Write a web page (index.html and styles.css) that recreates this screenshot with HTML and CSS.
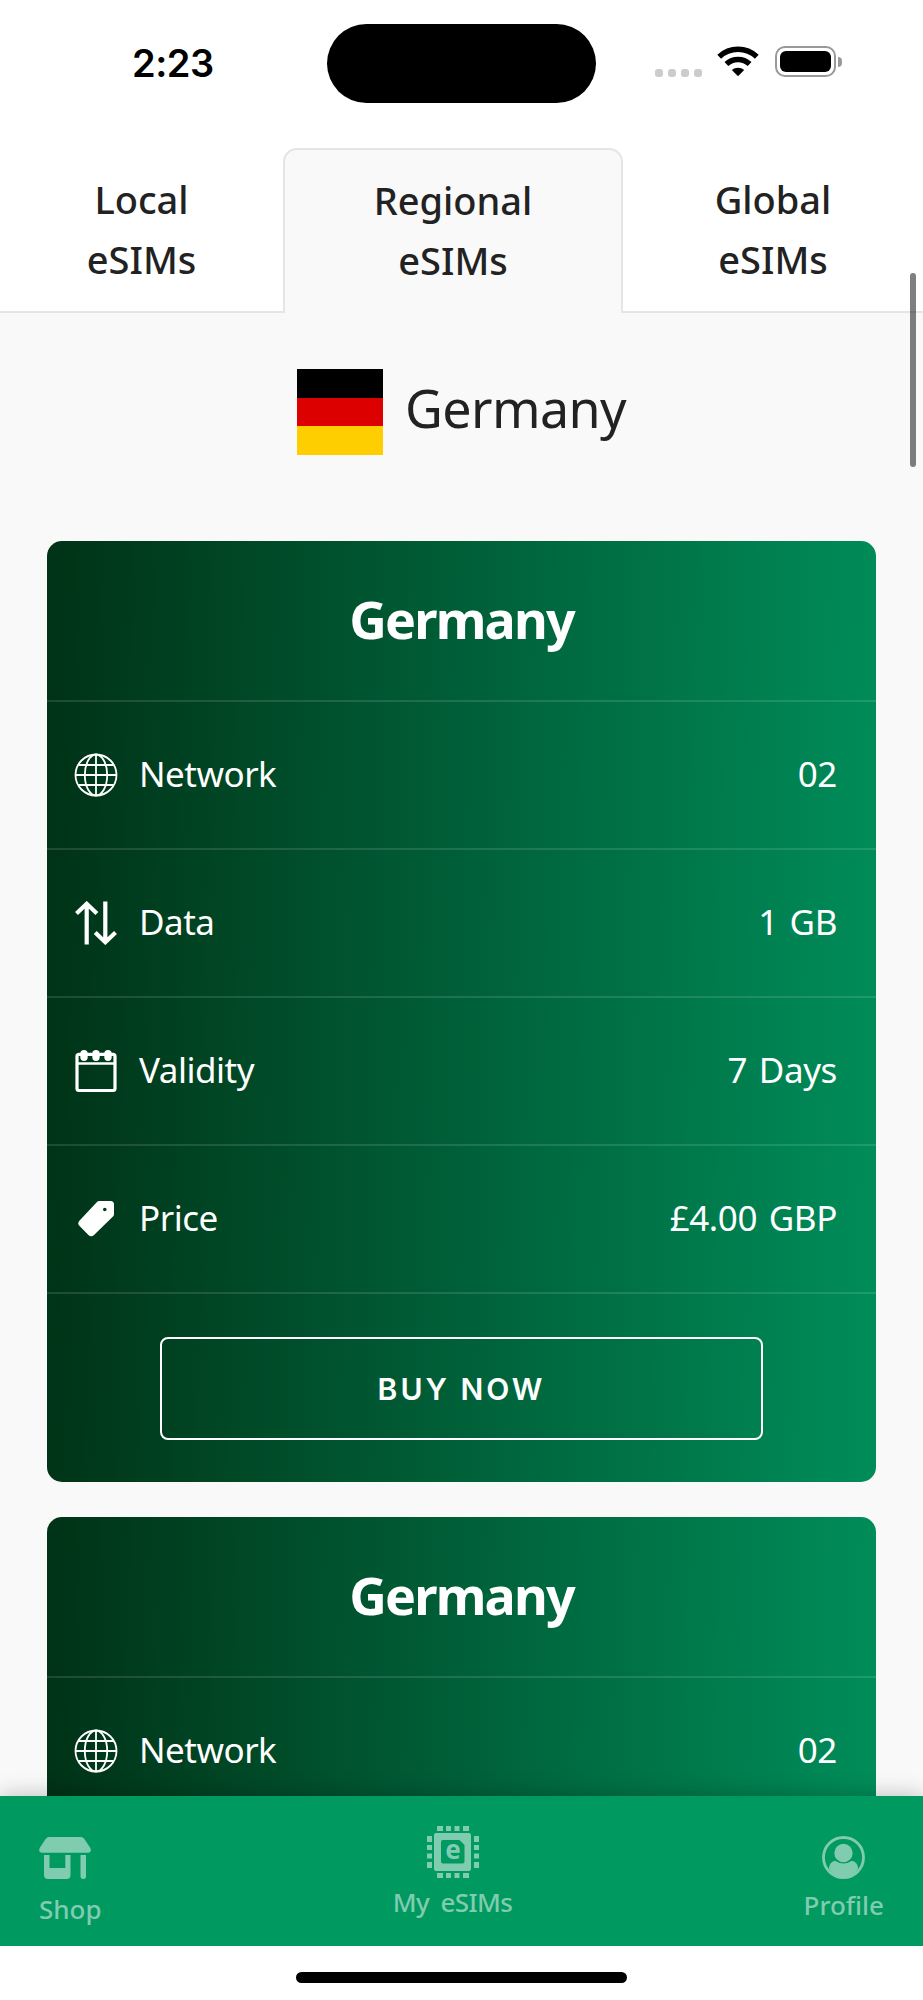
FILE: index.html
```html
<!DOCTYPE html>
<html lang="en">
<head>
    <meta charset="UTF-8">
    <meta name="viewport" content="width=device-width, initial-scale=1.0">
    <title>eSIM Shop - Germany</title>
    <link rel="stylesheet" href="styles.css">
</head>
<body>
    <!-- Shared icons -->
    <svg class="sprite" width="0" height="0">
        <symbol id="icon-globe" viewBox="0 0 44 44">
            <g fill="none" stroke="#fff" stroke-width="1.8">
                <circle cx="22" cy="22" r="20.5"/>
                <ellipse cx="22" cy="22" rx="11.2" ry="20.5"/>
                <path d="M22 1.5v41M1.5 22h41M4.5 12h35M4.5 32h35"/>
            </g>
        </symbol>
        <symbol id="icon-data" viewBox="0 0 44 44">
            <path d="M12.7 43.5V3M2.5 12.5L12.7 2.8l10.2 9.7M31.3 .5V41M21.2 31.5l10.1 9.7 10.2-9.7" fill="none" stroke="#fff" stroke-width="4.2"/>
        </symbol>
        <symbol id="icon-calendar" viewBox="0 0 44 44">
            <rect x="3" y="5.3" width="38" height="36.2" rx="2" fill="none" stroke="#fff" stroke-width="3.2"/>
            <path d="M2 14.5h40" stroke="#fff" stroke-width="2.6"/>
            <path d="M10 4.700v3.600M22 4.700v3.600M34 4.700v3.600" stroke="#fff" stroke-width="7.400" stroke-linecap="round"/>
        </symbol>
        <symbol id="icon-tag" viewBox="0 0 44 44">
            <path fill="#fff" fill-rule="evenodd" d="M25 4h11.500a3.500 3.500 0 0 1 3.500 3.500V17q0 1.500-1 2.500L20 38a4 4 0 0 1-5.600 0L5.600 29a4 4 0 0 1 0-5.600L23 5q1-1 2-1zM32.600 12.500a1.800 1.800 0 1 0-3.600 0a1.800 1.800 0 1 0 3.600 0z"/>
        </symbol>
    </svg>

    <div class="phone">
        <header class="status-bar">
            <div class="time">2:23</div>
            <div class="island"></div>
            <div class="status-icons">
                <div class="signal"><i></i><i></i><i></i><i></i></div>
                <svg class="wifi" width="42" height="31" viewBox="0 0 42 31">
                    <g fill="none" stroke="#000" stroke-width="5.5">
                        <path d="M2.2 10.8a27.5 27.5 0 0 1 37.6 0"/>
                        <path d="M9.4 18a17 17 0 0 1 23.2 0"/>
                    </g>
                    <path d="M21 30.3l-6.2-6.3a9.5 9.5 0 0 1 12.4 0z"/>
                </svg>
                <div class="battery"><div class="battery-level"></div></div>
                <div class="battery-tip"></div>
            </div>
        </header>

        <nav class="tabs">
            <a class="tab">Local<br>eSIMs</a>
            <a class="tab tab-active">Regional<br>eSIMs</a>
            <a class="tab">Global<br>eSIMs</a>
        </nav>

        <main class="content">
            <div class="country">
                <div class="flag"><span></span><span></span><span></span></div>
                <h1>Germany</h1>
            </div>

            <section class="card">
                <h2>Germany</h2>
                <div class="row">
                    <svg class="icon"><use href="#icon-globe"/></svg>
                    <span class="label">Network</span>
                    <span class="value">02</span>
                </div>
                <div class="row">
                    <svg class="icon"><use href="#icon-data"/></svg>
                    <span class="label">Data</span>
                    <span class="value">1 GB</span>
                </div>
                <div class="row">
                    <svg class="icon"><use href="#icon-calendar"/></svg>
                    <span class="label">Validity</span>
                    <span class="value">7 Days</span>
                </div>
                <div class="row">
                    <svg class="icon"><use href="#icon-tag"/></svg>
                    <span class="label">Price</span>
                    <span class="value">£4.00 GBP</span>
                </div>
                <div class="card-footer">
                    <button class="buy">BUY NOW</button>
                </div>
            </section>

            <section class="card">
                <h2>Germany</h2>
                <div class="row">
                    <svg class="icon"><use href="#icon-globe"/></svg>
                    <span class="label">Network</span>
                    <span class="value">02</span>
                </div>
            </section>
        </main>

        <nav class="bottom-nav">
            <a class="nav-item nav-shop">
                <svg width="52" height="42" viewBox="0 0 52 42" fill="currentColor">
                    <path d="M10 0h32q2 0 3.2 1.8l6 9q2 4-2 5H2.8q-4-1-2-5l6-9Q8 0 10 0z"/>
                    <path d="M5 18h5.500v13h15.800V18h5.200v20q0 4-4 4H9q-4 0-4-4z"/>
                    <path d="M41.500 18H47v21.200a2.750 2.750 0 0 1-5.500 0z"/>
                </svg>
                <span>Shop</span>
            </a>
            <a class="nav-item nav-esims">
                <svg width="52" height="52" viewBox="0 0 52 52" fill="currentColor">
                    <path fill-rule="evenodd" d="M9 7h33q2 0 2 2v34q0 2-2 2H9q-2 0-2-2V9q0-2 2-2zM16 14q-2 0-2 2v19.500q0 2 2 2h19.500q2 0 2-2V19l-5-5z"/>
                    <path d="M10 0h6v5h-6zM19 0h5v5h-5zM27.500 0h5v5h-5zM36 0h6v5h-6zM10 47h6v5h-6zM19 47h5v5h-5zM27.500 47h5v5h-5zM36 47h6v5h-6zM0 10h5v6H0zM0 19h5v5H0zM0 27.500h5v5H0zM0 36h5v6H0zM47 10h5v6h-5zM47 19h5v5h-5zM47 27.500h5v5h-5zM47 36h5v6h-5z"/>
                    <text class="chip-letter" x="26" y="33" text-anchor="middle">e</text>
                </svg>
                <span>My eSIMs</span>
            </a>
            <a class="nav-item nav-profile">
                <svg width="43" height="43" viewBox="0 0 43 43" fill="currentColor">
                    <circle cx="21.500" cy="21.500" r="20" fill="none" stroke="currentColor" stroke-width="2.800"/>
                    <circle cx="21.500" cy="17" r="9.200"/>
                    <path d="M7 33q0-7 6-8.200q8.500 5.400 17 0q6 1.200 6 8.200q-5.500 8.500-14.500 8.500T7 33z"/>
                </svg>
                <span>Profile</span>
            </a>
        </nav>

        <footer class="home-area"><div class="home-indicator"></div></footer>
        <div class="scrollbar"></div>
    </div>
</body>
</html>
```
FILE: styles.css
```css
* { box-sizing: border-box; }
body {
    margin: 0;
    background-color: #fff;
    font-family: "Noto Sans", sans-serif;
    color: #222;
}
.sprite { position: absolute; }
.phone {
    position: relative;
    display: flex;
    flex-direction: column;
    width: 923px;
    height: 2000px;
    overflow: hidden;
}

/* Status bar */
.status-bar {
    display: grid;
    grid-template-columns: 327px 269px 1fr;
    height: 148px;
    padding-top: 24px;
    align-items: start;
    flex-shrink: 0;
}
.time {
    padding: 16px 0 0 132px;
    font-family: Inter, sans-serif;
    font-size: 38px;
    font-weight: 600;
    line-height: 46px;
    letter-spacing: -0.5px;
    color: #000;
}
.island {
    height: 79px;
    border-radius: 40px;
    background-color: #000;
}
.status-icons {
    display: flex;
    align-items: center;
    padding: 22px 0 0 59px;
}
.signal {
    display: flex;
    gap: 5px;
    padding-top: 23px;
}
.signal i {
    width: 8px;
    height: 8px;
    border-radius: 3px;
    background-color: #ccc;
}
.wifi { margin-left: 15px; }
.battery {
    width: 61px;
    height: 31px;
    margin-left: 16px;
    padding: 3px;
    border: 2px solid #999;
    border-radius: 10px;
}
.battery-level {
    height: 21px;
    border-radius: 6px;
    background-color: #000;
}
.battery-tip {
    width: 4px;
    height: 10px;
    margin-left: 2px;
    border-radius: 0 4px 4px 0;
    background-color: #999;
}

/* Tabs */
.tabs {
    display: grid;
    grid-template-columns: 283px 340px 300px;
    height: 165px;
    flex-shrink: 0;
}
.tab {
    padding-top: 21px;
    border-bottom: 2px solid #e5e5e5;
    font-size: 38px;
    font-weight: 500;
    line-height: 60px;
    text-align: center;
}
.tab-active {
    padding-top: 20px;
    background-color: #f9f9f9;
    border: 2px solid #e5e5e5;
    border-bottom: none;
    border-radius: 14px 14px 0 0;
}

/* Content */
.content {
    flex: 1;
    overflow: hidden;
    padding: 56px 47px 0;
    background-color: #f9f9f9;
}
.country {
    display: flex;
    justify-content: center;
    align-items: center;
    gap: 22px;
    margin-bottom: 86px;
}
.flag {
    display: flex;
    flex-direction: column;
    width: 86px;
    height: 86px;
}
.flag span { flex: 1; background-color: #000; }
.flag span:nth-child(2) { background-color: #d00; }
.flag span:nth-child(3) { background-color: #ffce00; }
h1, h2 {
    margin: 0;
    font-size: 52px;
}
h1 {
    height: 86px;
    font-weight: 400;
    line-height: 78px;
    letter-spacing: -0.6px;
}
.card {
    margin-bottom: 35px;
    border-radius: 15px;
    background: linear-gradient(91deg, #003216, #008d5a);
    color: #fff;
}
h2 {
    height: 159px;
    padding-top: 35px;
    font-weight: 700;
    line-height: 86px;
    letter-spacing: -1.8px;
    text-align: center;
}
.row {
    display: flex;
    align-items: center;
    height: 148px;
    padding: 0 39px 0 27px;
    border-top: 2px solid rgba(255, 255, 255, 0.12);
    font-size: 35px;
}
.icon {
    width: 44px;
    height: 44px;
    margin-right: 21px;
}
.label {
    padding-bottom: 4px;
    letter-spacing: -0.5px;
}
.value {
    margin-left: auto;
    padding-bottom: 4px;
    letter-spacing: -0.4px;
    word-spacing: 3px;
}
.card-footer {
    display: flex;
    justify-content: center;
    height: 190px;
    padding-top: 43px;
    border-top: 2px solid rgba(255, 255, 255, 0.12);
}
.buy {
    width: 603px;
    height: 103px;
    padding: 0;
    border: 2px solid #fff;
    border-radius: 8px;
    background: none;
    color: #fff;
    font-family: Inter, sans-serif;
    font-size: 30px;
    font-weight: 600;
    letter-spacing: 3px;
}

/* Bottom navigation */
.bottom-nav {
    position: relative;
    display: flex;
    justify-content: space-between;
    height: 150px;
    padding: 0 39px;
    flex-shrink: 0;
    background-color: #009960;
    box-shadow: 0 0 22px rgba(0, 0, 0, 0.25);
    color: #80ccb0;
}
.nav-item {
    display: flex;
    flex-direction: column;
    align-items: center;
    font-size: 26px;
    font-weight: 500;
    line-height: 36px;
}
.nav-shop { align-items: flex-start; padding-top: 41px; }
.nav-shop span { margin-top: 12px; }
.nav-esims { padding-top: 30px; }
.nav-esims span {
    margin-top: 6px;
    letter-spacing: -0.6px;
    word-spacing: 5px;
}
.nav-profile { padding-top: 40px; }
.nav-profile span { margin-top: 8px; }
.chip-letter {
    font-size: 26px;
    font-weight: 700;
}
.home-area {
    position: relative;
    display: flex;
    justify-content: center;
    height: 54px;
    padding-top: 26px;
    flex-shrink: 0;
    background-color: #fff;
}
.home-indicator {
    width: 331px;
    height: 11px;
    border-radius: 6px;
    background-color: #000;
}
.scrollbar {
    position: absolute;
    top: 273px;
    left: 910px;
    width: 6px;
    height: 194px;
    border-radius: 3px;
    background-color: rgba(0, 0, 0, 0.5);
}
```
